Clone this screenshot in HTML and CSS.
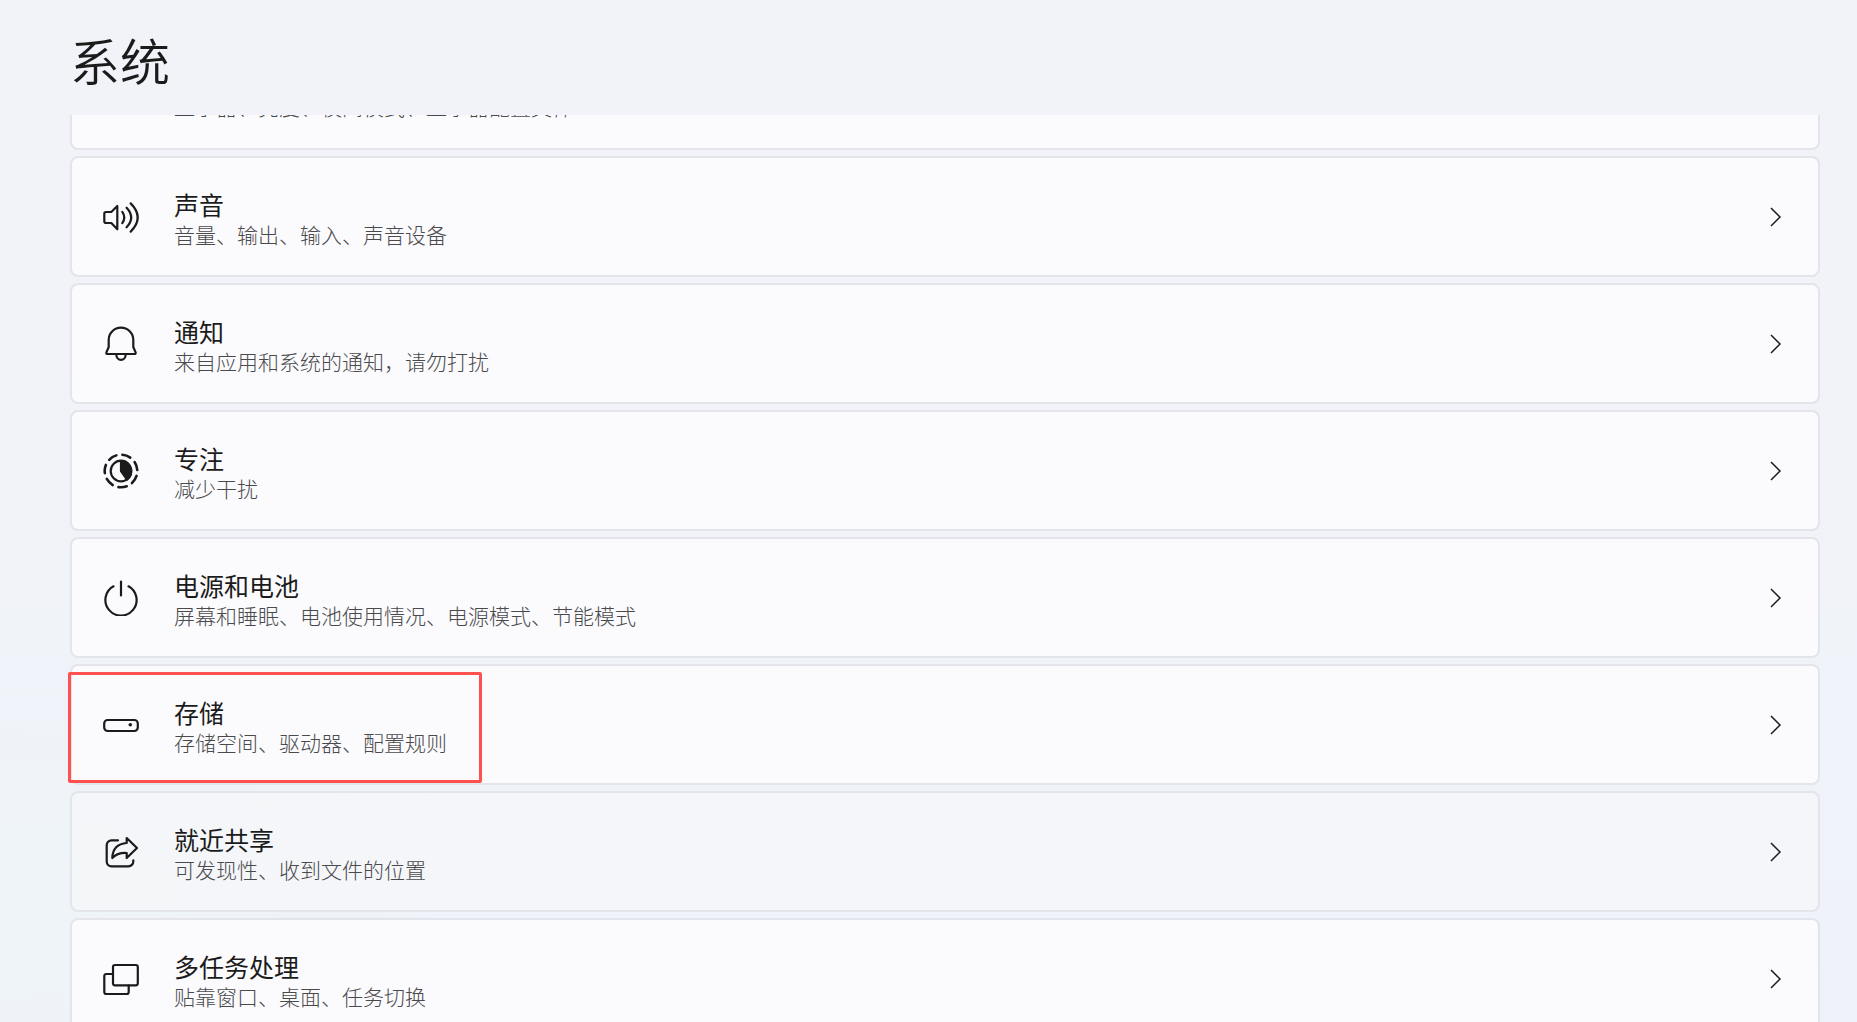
FILE: index.html
```html
<!DOCTYPE html>
<html lang="zh-CN">
<head>
    <meta charset="UTF-8">
    <meta name="viewport" content="width=device-width, initial-scale=1.0">
    <title>系统</title>
    <link rel="stylesheet" href="styles.css">
</head>
<body>
    <header class="page-header">
        <h1>系统</h1>
    </header>
    <main class="scroll-area">
        <nav class="settings-list">
            <a class="card scrolled" href="#display">
                <span class="card-desc">显示器、亮度、夜间模式、显示器配置文件</span>
            </a>
            <a class="card" href="#sound">
                <svg class="icon" viewBox="0 0 36 36"><path d="M14.3 7v23.3L8.3 24H3a1.7 1.7 0 0 1-1.7-1.7v-7.6A1.7 1.7 0 0 1 3 13h5.3z"/><path d="M19.3 12.9q4 5.6 0 11.2M23.6 8.7q9.2 9.8 0 19.6M27.7 4.4q14 14.1 0 28.2"/></svg>
                <span class="card-text">
                    <span class="card-title">声音</span>
                    <span class="card-desc">音量、输出、输入、声音设备</span>
                </span>
                <svg class="chevron" viewBox="0 0 12 20"><path d="M1 1l9 9-9 9"/></svg>
            </a>
            <a class="card" href="#notifications">
                <svg class="icon" viewBox="0 0 36 36"><path d="M5.7 14a12.3 12.3 0 0 1 24.6 0v7l2.3 5.4q.5 1.6-1.2 1.6H4.6Q2.9 28 3.4 26.4L5.7 21z"/><path d="M13.3 28.5a4.7 5.3 0 0 0 9.4 0"/></svg>
                <span class="card-text">
                    <span class="card-title">通知</span>
                    <span class="card-desc">来自应用和系统的通知，请勿打扰</span>
                </span>
                <svg class="chevron" viewBox="0 0 12 20"><path d="M1 1l9 9-9 9"/></svg>
            </a>
            <a class="card" href="#focus">
                <svg class="icon" viewBox="0 0 36 36"><circle class="dashes" cx="18" cy="18" r="16.3" pathLength="70" transform="rotate(-85 18 18)"/><circle cx="18" cy="18" r="10.3"/><path class="pie" d="M18 8v10l6 8.500A10.300 10.300 0 0 0 18 8z"/></svg>
                <span class="card-text">
                    <span class="card-title">专注</span>
                    <span class="card-desc">减少干扰</span>
                </span>
                <svg class="chevron" viewBox="0 0 12 20"><path d="M1 1l9 9-9 9"/></svg>
            </a>
            <a class="card" href="#power">
                <svg class="icon" viewBox="0 0 36 36"><path d="M10.5 6.3a15.6 15.6 0 1 0 15 0M18 1.500v14"/></svg>
                <span class="card-text">
                    <span class="card-title">电源和电池</span>
                    <span class="card-desc">屏幕和睡眠、电池使用情况、电源模式、节能模式</span>
                </span>
                <svg class="chevron" viewBox="0 0 12 20"><path d="M1 1l9 9-9 9"/></svg>
            </a>
            <a class="card marked" href="#storage">
                <svg class="icon" viewBox="0 0 36 36"><rect x="1.2" y="13" width="33.6" height="11" rx="3.5"/><circle class="dot" cx="27.3" cy="17.8" r="1.8"/></svg>
                <span class="card-text">
                    <span class="card-title">存储</span>
                    <span class="card-desc">存储空间、驱动器、配置规则</span>
                </span>
                <svg class="chevron" viewBox="0 0 12 20"><path d="M1 1l9 9-9 9"/></svg>
            </a>
            <a class="card hovered" href="#nearby">
                <svg class="icon" viewBox="0 0 36 36"><path d="M15 6.3H8.5a4.8 4.8 0 0 0-4.8 4.8v16.4a4.8 4.8 0 0 0 4.8 4.8h17a4.8 4.8 0 0 0 4.8-4.8v-1.2"/><path d="M23.7 4L34 14 23.7 24v-5Q14.5 18.5 9.3 24 9.8 10 23.7 9z"/></svg>
                <span class="card-text">
                    <span class="card-title">就近共享</span>
                    <span class="card-desc">可发现性、收到文件的位置</span>
                </span>
                <svg class="chevron" viewBox="0 0 12 20"><path d="M1 1l9 9-9 9"/></svg>
            </a>
            <a class="card" href="#multitasking">
                <svg class="icon" viewBox="0 0 36 36"><rect x="10" y="4" width="24.8" height="20.3" rx="2"/><path d="M10 13H3.3a2 2 0 0 0-2 2v16a2 2 0 0 0 2 2h20.4a2 2 0 0 0 2-2v-6.5"/></svg>
                <span class="card-text">
                    <span class="card-title">多任务处理</span>
                    <span class="card-desc">贴靠窗口、桌面、任务切换</span>
                </span>
                <svg class="chevron" viewBox="0 0 12 20"><path d="M1 1l9 9-9 9"/></svg>
            </a>
        </nav>
    </main>
</body>
</html>
```
FILE: styles.css
```css
*,
*::after {
    box-sizing: border-box;
}
body {
    display: flex;
    flex-direction: column;
    height: 100vh;
    margin: 0;
    overflow: hidden;
    font-family: "Noto Sans CJK SC", sans-serif;
    color: #1b1b1b;
    background:
        radial-gradient(ellipse 500px 240px at 0 88%, #eef4f7, rgba(238, 244, 247, 0)),
        linear-gradient(#f1f3f8 30%, #eff2fa);
}
.page-header {
    flex: none;
    height: 115px;
    padding: 23px 70px 0;
}
.page-header h1 {
    margin: 0;
    font-size: 50px;
    font-weight: 350;
    line-height: 72px;
}
.scroll-area {
    flex: 1;
    min-height: 0;
    overflow: hidden;
    padding: 0 37px 0 70px;
}
/* list is scrolled down, the first card is partly under the header */
.settings-list {
    display: flex;
    flex-direction: column;
    gap: 6px;
    margin-top: -86px;
}
.card {
    position: relative;
    display: flex;
    flex: none;
    align-items: center;
    height: 121px;
    padding: 0 36px 0 31px;
    border: 2px solid #e3e5eb;
    border-radius: 8px;
    background: rgba(252, 252, 254, 0.9);
    background-clip: padding-box;
    color: inherit;
    text-decoration: none;
}
.card.hovered {
    background-color: rgba(249, 249, 249, 0.5);
}
.card.scrolled {
    align-items: flex-end;
    padding: 0 36px 28px 102px;
}
.icon {
    flex: none;
    width: 36px;
    height: 36px;
    fill: none;
    stroke: #1b1b1b;
    stroke-width: 2.2;
    stroke-linecap: round;
    stroke-linejoin: round;
}
.icon .pie {
    fill: #1b1b1b;
}
.icon .dot {
    fill: #1b1b1b;
    stroke: none;
}
.icon .dashes {
    stroke-width: 2.6;
    stroke-dasharray: 5.8 4.2;
}
.card-text {
    display: flex;
    flex: 1;
    flex-direction: column;
    margin-left: 35px;
    padding-top: 2px;
}
.card-title {
    font-size: 25px;
    line-height: 32px;
}
.card-desc {
    font-size: 21px;
    font-weight: 300;
    line-height: 28px;
    color: #4a4a4c;
}
.chevron {
    flex: none;
    width: 12px;
    height: 20px;
    fill: none;
    stroke: #1b1b1b;
    stroke-width: 1.5;
}
/* red frame around the storage entry */
.marked::after {
    content: "";
    position: absolute;
    top: 6px;
    left: -4px;
    width: 414px;
    height: 111px;
    border: 3px solid #ff5050;
    border-radius: 2px;
}
```
